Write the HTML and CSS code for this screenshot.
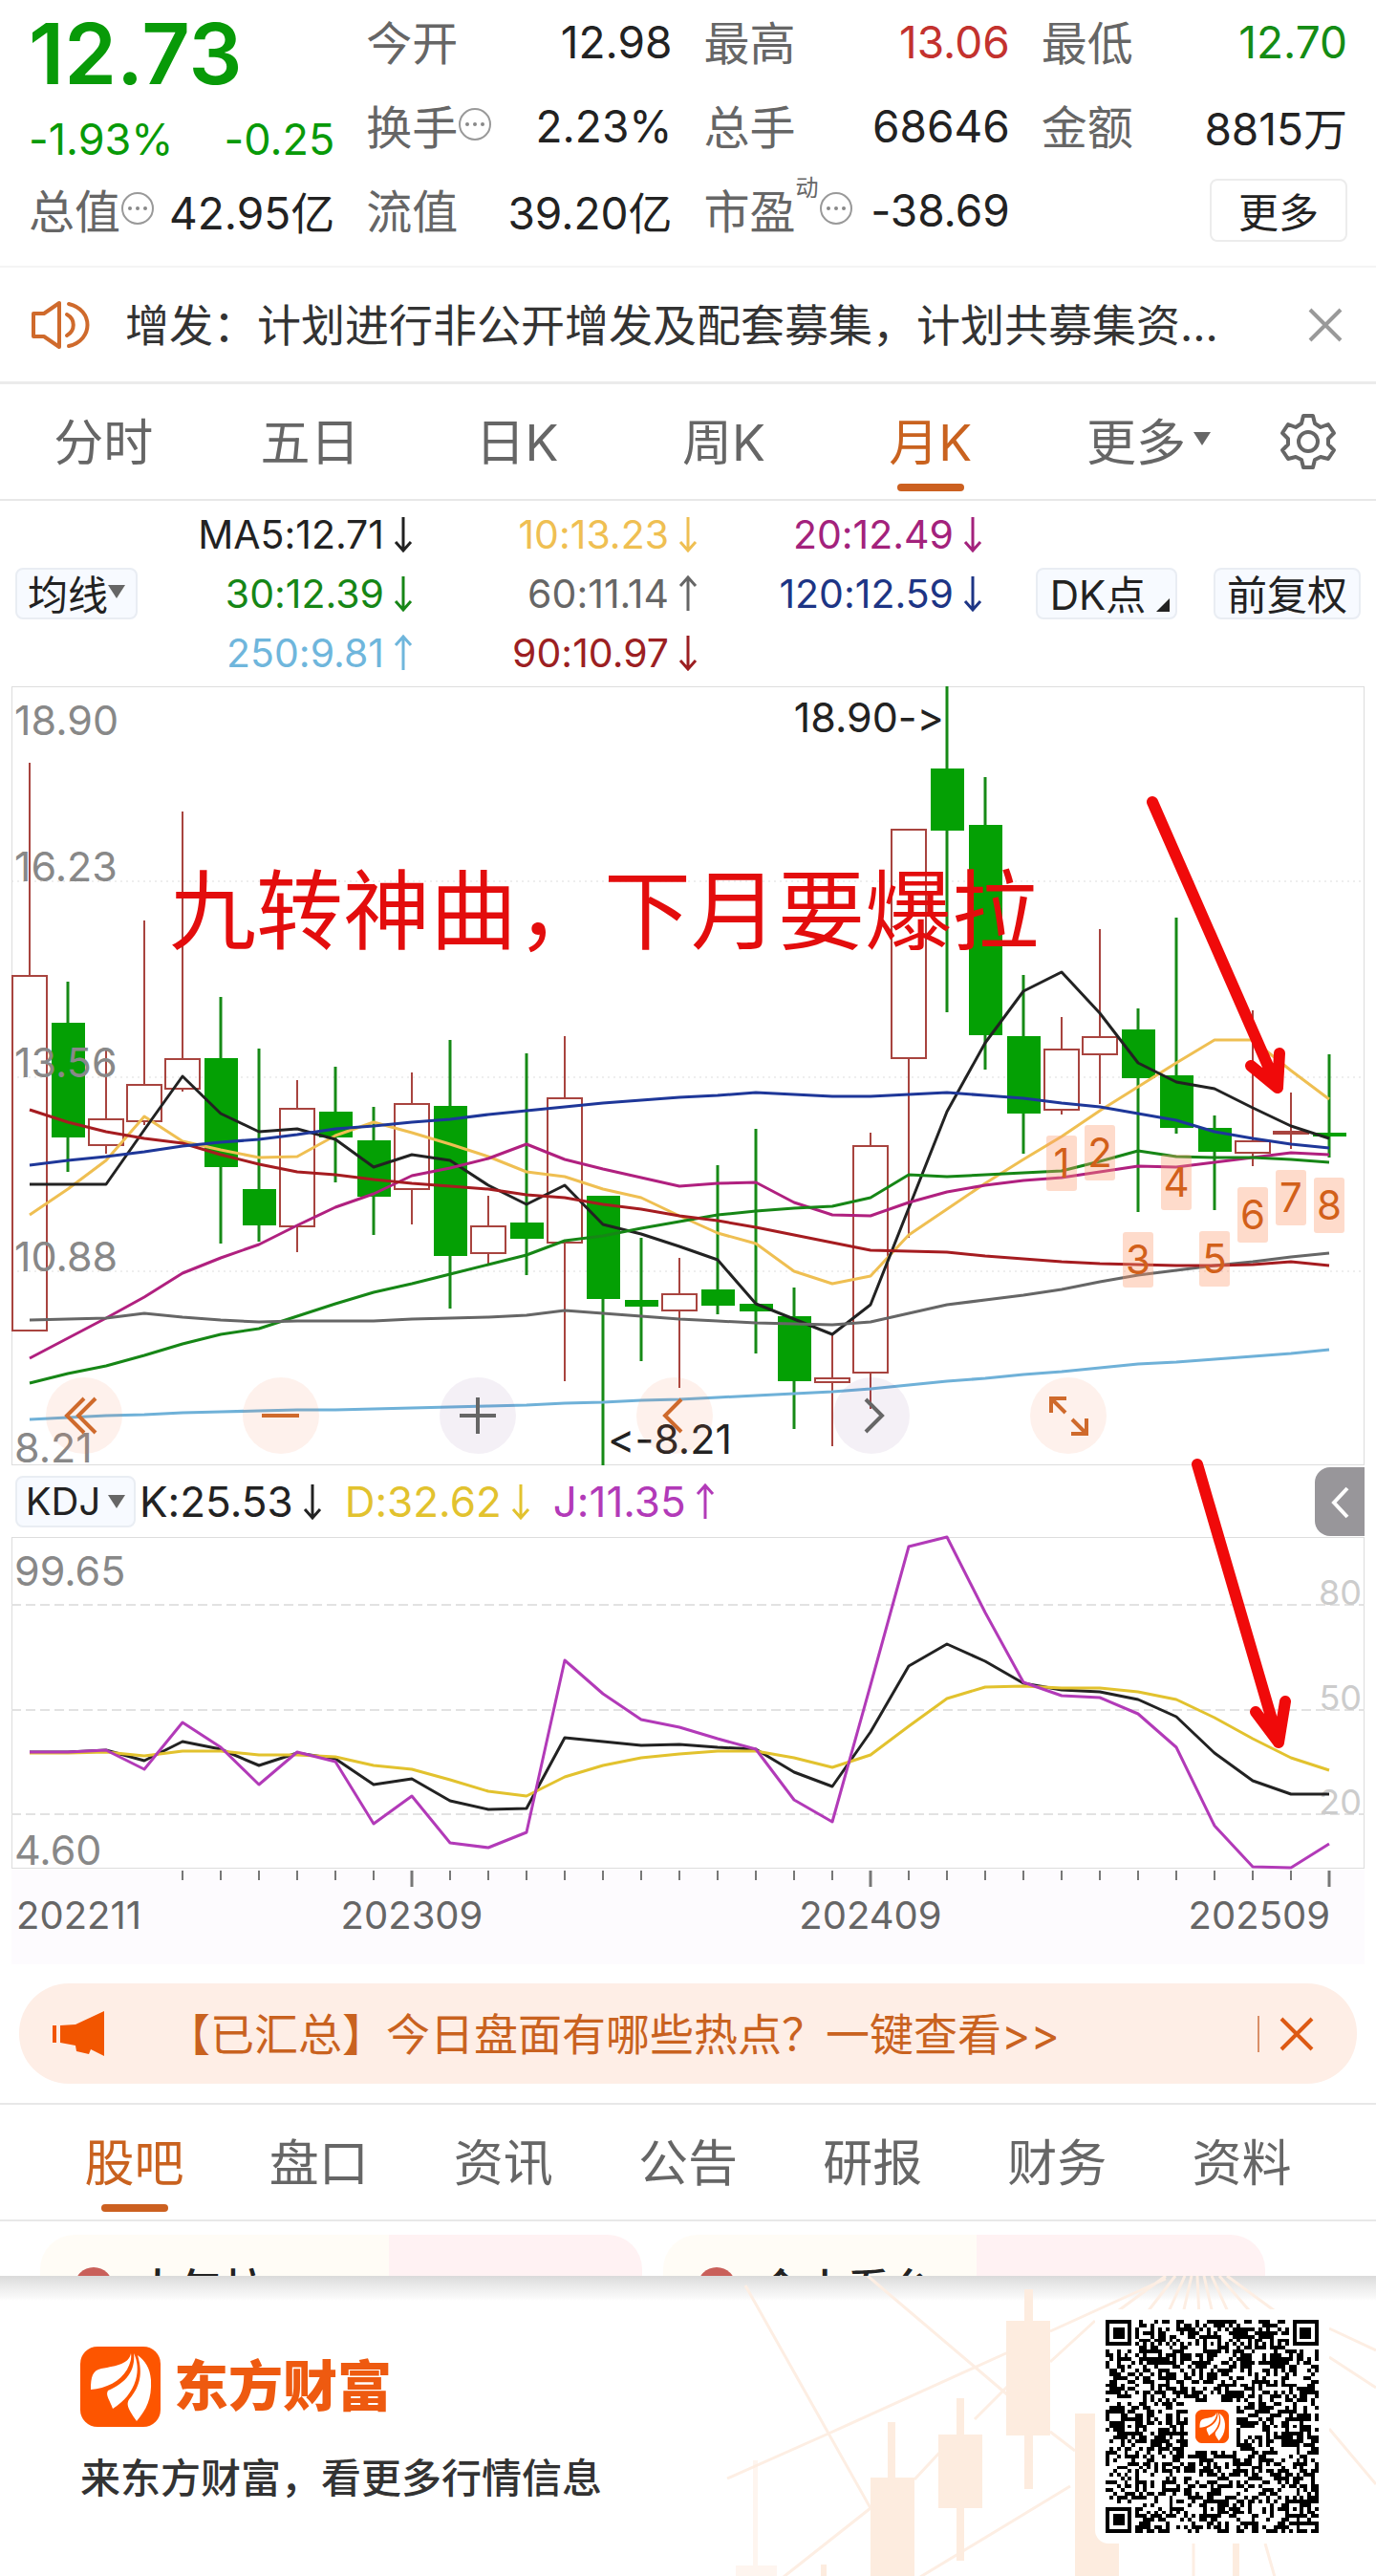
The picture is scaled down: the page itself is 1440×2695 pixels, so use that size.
FILE: index.html
```html
<!DOCTYPE html>
<html lang="zh-CN">
<head>
<meta charset="utf-8">
<meta name="viewport" content="width=device-width, initial-scale=1">
<title>月K - 东方财富</title>
<link rel="stylesheet" href="styles.css">
</head>
<body>
<svg class="defs" aria-hidden="true">
  <symbol id="info" viewBox="0 0 36 36"><circle cx="18" cy="18" r="16" fill="none" stroke="#999" stroke-width="2"/><circle cx="10" cy="18" r="2" fill="#888"/><circle cx="18" cy="18" r="2" fill="#888"/><circle cx="26" cy="18" r="2" fill="#888"/></symbol>
  <symbol id="down" viewBox="0 0 20 38"><path d="M10 1v35M2 27l8 9 8-9" fill="none" stroke="currentColor" stroke-width="3"/></symbol>
  <symbol id="up" viewBox="0 0 20 38"><path d="M10 37V2M2 11l8-9 8 9" fill="none" stroke="currentColor" stroke-width="3"/></symbol>
  <symbol id="close" viewBox="0 0 38 38"><path d="M3 3l32 32M35 3L3 35" fill="none" stroke="currentColor" stroke-width="4"/></symbol>
  <symbol id="caret" viewBox="0 0 18 16"><path d="M0 1h18L9 15z" fill="#666"/></symbol>
  <symbol id="mark" viewBox="0 0 84 84"><rect width="84" height="84" rx="18" fill="#fd5500"/><path d="M53 7C51 18 39 20 22 23c-9 2-11 8-11 22 16-1 31-9 38-21 3-6 5-11 4-17z" fill="#fff"/><path d="M56 7c2 18-8 31-27 39-3 5 2 10 5 19 12-8 20-17 24-30 3-10 2-20-2-28z" fill="#fff"/><path d="M60 9c6 20 2 32-7 44-6 6-4 11 6 25 10-12 16-23 15-43-1-13-6-20-14-26z" fill="#fff"/></symbol>
</svg>

<header class="quote">
  <div class="lead">
    <strong class="price">12.73</strong>
    <div class="change"><span>-1.93%</span><span>-0.25</span></div>
  </div>
  <div class="cell"><span class="key">今开</span><span class="val">12.98</span></div>
  <div class="cell"><span class="key">最高</span><span class="val rise">13.06</span></div>
  <div class="cell"><span class="key">最低</span><span class="val fall">12.70</span></div>
  <div class="cell"><span class="key">换手<svg class="info"><use href="#info"/></svg></span><span class="val">2.23%</span></div>
  <div class="cell"><span class="key">总手</span><span class="val">68646</span></div>
  <div class="cell"><span class="key">金额</span><span class="val">8815万</span></div>
  <div class="cell"><span class="key">总值<svg class="info"><use href="#info"/></svg></span><span class="val">42.95亿</span></div>
  <div class="cell"><span class="key">流值</span><span class="val">39.20亿</span></div>
  <div class="cell"><span class="key">市盈<sup>动</sup><svg class="info"><use href="#info"/></svg></span><span class="val">-38.69</span></div>
  <div class="cell end"><button class="more" type="button">更多</button></div>
</header>

<section class="notice">
  <svg class="speaker" viewBox="0 0 62 52" fill="none" stroke="#cf6a2c" stroke-width="4" stroke-linejoin="round"><path d="M2 14h11L29 3v46L13 38H2z"/><path d="M37 15c9 5 9 17 0 22M39 4c26 6 26 38 0 44" stroke-linecap="round"/></svg>
  <a class="notice-text" href="#notice">增发：计划进行非公开增发及配套募集，计划共募集资...</a>
  <button class="icon-btn grey" type="button" aria-label="关闭公告"><svg><use href="#close"/></svg></button>
</section>

<nav class="periods">
  <a href="#fs">分时</a><a href="#d5">五日</a><a href="#dk">日K</a><a href="#wk">周K</a><a class="on" href="#mk">月K</a><a class="extra" href="#more">更多<svg class="caret small"><use href="#caret"/></svg></a>
  <button class="gear" type="button" aria-label="设置"><svg viewBox="0 0 60 60" fill="none" stroke="#666" stroke-width="4" stroke-linejoin="round"><path d="M25 3h10l2 8 6 4 8-3 6 9-6 6v6l6 6-6 9-8-2-6 3-2 8H25l-2-8-6-3-8 2-6-9 6-6v-6l-6-6 6-9 8 3 6-4z"/><circle cx="30" cy="30" r="10"/></svg></button>
</nav>

<section class="averages">
  <button class="chip ma" type="button">均线<svg class="caret"><use href="#caret"/></svg></button>
  <span class="c-5">MA5:12.71<svg class="arrow"><use href="#down"/></svg></span>
  <span class="c-10">10:13.23<svg class="arrow"><use href="#down"/></svg></span>
  <span class="c-20">20:12.49<svg class="arrow"><use href="#down"/></svg></span>
  <div class="tools"><button class="chip dk" type="button">DK点<i class="corner"></i></button><button class="chip" type="button">前复权</button></div>
  <span class="c-30">30:12.39<svg class="arrow"><use href="#down"/></svg></span>
  <span class="c-60">60:11.14<svg class="arrow"><use href="#up"/></svg></span>
  <span class="c-120">120:12.59<svg class="arrow"><use href="#down"/></svg></span>
  <span class="c-250">250:9.81<svg class="arrow"><use href="#up"/></svg></span>
  <span class="c-90">90:10.97<svg class="arrow"><use href="#down"/></svg></span>
</section>

<section class="chart">
  <svg id="kline" viewBox="0 0 1416 815" role="img" aria-label="月K线图"></svg>
  <div class="controls">
    <button type="button" aria-label="最左"><svg viewBox="0 0 80 80"><path d="M40 22L22 40l18 18M52 22L34 40l18 18"/></svg></button>
    <button type="button" aria-label="缩小"><svg viewBox="0 0 80 80"><path d="M20 40h39"/></svg></button>
    <button class="cool" type="button" aria-label="放大"><svg viewBox="0 0 80 80"><path d="M21 40h38M40 21v38"/></svg></button>
    <button type="button" aria-label="左移"><svg viewBox="0 0 80 80"><path d="M47 23L30 40l17 17"/></svg></button>
    <button class="cool" type="button" aria-label="右移"><svg viewBox="0 0 80 80"><path d="M34 23l17 17-17 17"/></svg></button>
    <button type="button" aria-label="全屏"><svg viewBox="0 0 80 80"><path d="M22 37V22h16M23 23l14 14M59 43v16H43M58 58L44 44"/></svg></button>
  </div>
</section>

<section class="kdj-bar">
  <button class="chip" type="button">KDJ<svg class="caret small"><use href="#caret"/></svg></button>
  <span class="k">K:25.53<svg class="arrow"><use href="#down"/></svg></span>
  <span class="d">D:32.62<svg class="arrow"><use href="#down"/></svg></span>
  <span class="j">J:11.35<svg class="arrow"><use href="#up"/></svg></span>
  <button class="drawer" type="button" aria-label="展开"><svg viewBox="0 0 52 72"><path d="M34 22L20 37l14 15" fill="none" stroke="#fff" stroke-width="4"/></svg></button>
</section>

<section class="chart kdj">
  <svg id="kdj" viewBox="0 0 1416 447" role="img" aria-label="KDJ指标图"></svg>
</section>

<aside class="banner">
  <svg class="horn" viewBox="0 0 56 48" fill="#f25500"><path d="M0 15h4v18H0zM8 15l16-1L54 0v47L40 40l-2 5-13-3-1-6-16-3z"/></svg>
  <a href="#hot">【已汇总】今日盘面有哪些热点？一键查看&gt;&gt;</a>
  <button class="icon-btn hot" type="button" aria-label="关闭提示"><svg><use href="#close"/></svg></button>
</aside>

<nav class="sections">
  <a class="on" href="#guba">股吧</a><a href="#pankou">盘口</a><a href="#news">资讯</a><a href="#notices">公告</a><a href="#report">研报</a><a href="#finance">财务</a><a href="#data">资料</a>
</nav>

<section class="cards">
  <article class="card"><i class="dot"></i><h3>大午拉</h3></article>
  <article class="card"><i class="dot"></i><h3>今小看台</h3></article>
</section>

<footer class="promo">
  <svg class="backdrop" viewBox="0 0 720 315" aria-hidden="true">
    <g fill="none" stroke="#fdeee3" stroke-width="3"><path d="M60 10L191 243L100 315M188 0L335 125M379 163l26 20M41 212L147 165L335 80M379 58L500 3M237 213l28-30M300 150l35-35M379 90l47-43M243 315L400 220M500 0l-60 44M510 0l-34 44M520 0l-20 44M527 0l-10 44M533 0l2 44M540 0l10 44M548 0l20 44M556 0l38 44M564 0l60 44M671 55l49 23M671 85l49 32M671 160l49 58M529 280v35M604 280l10 35"/></g>
    <g fill="#fdecdf"><path d="M352 14h9v209h-9zM333 47h46v120h-46zM281 128h8v170h-8zM262 166h46v77h-46zM209 153h8v60h-8zM191 211h46v104h-46zM405 144h46v171h-46zM139 302h6v13h-6zM570 280h7v35h-7z"/><path d="M68 193h5v110h-5zM50 303h43v12H50z" opacity=".5"/></g>
  </svg>
  <div class="about">
    <div class="brand"><svg class="logo"><use href="#mark"/></svg><b>东方财富</b></div>
    <p>来东方财富，看更多行情信息</p>
  </div>
  <div class="qr"><svg id="qr" viewBox="0 0 57 57" role="img" aria-label="二维码"></svg></div>
</footer>
<script src="chart.js"></script>
</body>
</html>
```
FILE: styles.css
```css
* { box-sizing: border-box; }
body { margin: 0; background: #fff; color: #222; font-family: Inter, "Noto Sans CJK SC", sans-serif; font-feature-settings: "calt" 0; }
button { font: inherit; color: inherit; margin: 0; padding: 0; border: 0; background: none; }
a { color: inherit; text-decoration: none; }
svg { display: block; flex: none; }
.defs { position: absolute; width: 0; height: 0; }
.info { width: 36px; height: 36px; }
.arrow { width: 20px; height: 38px; margin-left: 10px; }
.caret { width: 18px; height: 16px; }
.icon-btn svg { width: 38px; height: 38px; }
.grey { color: #999; }

.quote { display: grid; grid-template-columns: repeat(4, 1fr); grid-auto-rows: 88px; column-gap: 33px; padding: 0 30px 14px; border-bottom: 2px solid #f4f4f4; font-size: 46px; }
.lead { grid-row: span 2; color: #089a08; }
.price { display: block; font-size: 88px; line-height: 112px; font-weight: 600; }
.change { display: flex; justify-content: space-between; font-size: 45px; line-height: 68px; }
.cell { display: flex; align-items: center; justify-content: space-between; white-space: nowrap; }
.key { display: flex; align-items: center; padding-bottom: 4px; font-size: 48px; color: #666; }
.key sup { align-self: flex-start; font-size: 24px; line-height: 28px; }
.rise { color: #c3322e; }
.fall { color: #148c14; }
.end { justify-content: flex-end; }
.more { width: 144px; height: 66px; padding-bottom: 4px; border: 2px solid #ececec; border-radius: 8px; font-size: 42px; }

.notice { display: flex; align-items: center; height: 122px; padding: 0 34px 0 33px; border-bottom: 3px solid #ebebeb; font-size: 46px; }
.speaker { width: 62px; height: 52px; margin-right: 36px; }
.notice-text { flex: 1; padding-bottom: 6px; white-space: nowrap; color: #333; }

.periods { display: flex; height: 122px; border-bottom: 2px solid #e8e8e8; font-size: 52px; color: #666; }
.periods a, .sections a { position: relative; flex: 1; display: flex; align-items: center; justify-content: center; padding-bottom: 6px; }
.periods .extra { flex: 0 0 216px; padding-left: 24px; }
.periods .on, .sections .on { color: #c9621f; }
.on::after { content: ""; position: absolute; left: 50%; bottom: 8px; width: 70px; height: 8px; margin-left: -35px; border-radius: 4px; background: #cc6020; }
.caret.small { margin-left: 8px; }
.gear { width: 142px; display: flex; align-items: center; justify-content: center; }
.gear svg { width: 60px; height: 60px; }

.averages { display: grid; grid-template-columns: 128px 288fr 298fr 298fr 396fr; grid-template-rows: repeat(3, 62px); padding: 4px 16px; font-size: 41px; }
.averages span { display: flex; align-items: center; justify-content: flex-end; }
.chip { display: flex; align-items: center; justify-content: center; height: 54px; padding: 0 12px 4px; border: 2px solid #e9edf3; border-radius: 8px; background: #f7faff; font-size: 42px; white-space: nowrap; }
.ma { grid-row: 1 / 4; align-self: center; padding: 0 0 4px; }
.tools { grid-row: 1 / 4; grid-column: 5; display: flex; align-items: center; justify-content: flex-end; gap: 38px; }
.dk { position: relative; width: 148px; padding: 0 32px 4px 14px; }
.corner { position: absolute; right: 6px; bottom: 6px; border-left: 14px solid transparent; border-bottom: 14px solid #222; }
.c-5 { color: #222; }
.c-10 { color: #efbf52; }
.c-20 { color: #a3227c; }
.c-30 { color: #168616; }
.c-60 { color: #666; }
.c-120 { color: #1d3585; }
.c-250 { color: #6fb6dc; }
.c-90 { color: #9c1f22; }
.averages .c-30 { grid-column: 2; }
.averages .c-250 { grid-column: 2; }

.chart { position: relative; margin: 0 12px; }
.chart > svg { width: 100%; overflow: visible; }
.chart text { font-size: 43px; fill: #888; }
.chart .note { fill: #222; }
.chart .level { font-size: 36px; fill: #ccc; text-anchor: end; }
.chart .date { font-size: 40px; fill: #666; }
.chart .middle, .chart .count { text-anchor: middle; }
.chart .last { text-anchor: end; }
.chart .count { font-size: 42px; fill: #d2601a; }
.chart .shout { font-size: 91px; font-weight: 400; fill: #e30d0d; }
.kdj { margin-bottom: 20px; }
.controls { position: absolute; left: 36px; bottom: 12px; display: flex; gap: 126px; }
.controls button { width: 80px; height: 80px; border-radius: 50%; background: rgba(250, 120, 70, 0.1); }
.controls path { fill: none; stroke: #cf6a2c; stroke-width: 4; }
.controls .cool { background: rgba(110, 70, 140, 0.08); }
.controls .cool path { stroke: #666; }

.kdj-bar { display: flex; align-items: center; height: 75px; padding: 0 12px 0 16px; font-size: 44px; }
.kdj-bar .chip { width: 126px; padding: 0; font-size: 40px; }
.kdj-bar span { display: flex; align-items: center; margin-right: 24px; }
.kdj-bar .k { margin-left: 4px; }
.kdj-bar .d { color: #e2c22e; }
.kdj-bar .j { color: #b23ab8; }
.drawer { width: 52px; height: 72px; margin-left: auto; border-radius: 16px 0 0 16px; background: #98969a; }

.banner { display: flex; align-items: center; height: 105px; margin: 0 20px 20px; padding: 0 44px 0 35px; border-radius: 52px; background: #feeee6; color: #c9621f; font-size: 46px; }
.banner a { flex: 1; margin-left: 63px; padding-bottom: 6px; white-space: nowrap; }
.horn { width: 56px; height: 48px; }
.hot { padding-left: 20px; border-left: 2px solid #d98f68; color: #dd5a14; }

.sections { display: flex; height: 124px; padding: 0 44px; border-top: 2px solid #e8e8e8; border-bottom: 2px solid #e8e8e8; font-size: 52px; color: #666; }

.cards { display: flex; gap: 22px; height: 57px; padding: 14px 116px 0 42px; overflow: hidden; }
.card { flex: 1; display: flex; height: 120px; padding: 34px 36px; border-radius: 36px; background: linear-gradient(90deg, #fffcf6 58%, #fff2f3 58%); }
.card + .card { background: linear-gradient(90deg, #fffcf6 52%, #fff2f3 52%); }
.dot { width: 40px; height: 40px; border-radius: 50%; background: #c9605a; }
.card h3 { margin: 0 0 0 24px; font-size: 46px; line-height: 46px; font-weight: 500; }

.promo { position: relative; display: flex; align-items: flex-start; justify-content: space-between; height: 315px; padding: 35px 49px 35px 84px; background: linear-gradient(#dadada, #ececec 12px, #f8f8f8 22px, #fff 26px); }
.backdrop { position: absolute; right: 0; top: 0; width: 50%; height: 100%; }
.about { padding-top: 39px; }
.brand { display: flex; align-items: center; gap: 14px; height: 84px; color: #ee5a10; font-size: 57px; line-height: 84px; }
.brand b { font-weight: 900; }
.logo { width: 84px; height: 84px; }
.about p { margin: 24px 0 0; font-size: 42px; line-height: 60px; font-weight: 500; color: #333; }
.qr { position: relative; width: 245px; padding: 11px; border-radius: 14px; background: #fff; }
.qr svg { width: 100%; }
```
FILE: chart.js
```js
// x of the i-th month, shared by both panels
const x = i => 19 + 40 * i;
const line = (ys, color) => `<polyline fill="none" stroke="${color}" stroke-width="3" stroke-linejoin="round" points="${ys.map((y, i) => x(i) + ',' + y).join(' ')}"/>`;
const text = (cls, px, py, s) => `<text class="${cls}" x="${px}" y="${py}">${s}</text>`;
const pointer = d => `<path d="${d}" fill="none" stroke="#f00a0a" stroke-width="12" stroke-linecap="round" stroke-linejoin="round"/>`;

// [high, body top, body bottom, low, direction]
const candles = [
  [80,303,674,674,1],[309,352,472,508,0],[380,453,480,489,1],[245,417,455,459,1],[131,390,421,424,1],
  [325,389,503,583,0],[379,526,564,581,0],[412,442,565,592,1],[398,445,472,519,0],[440,475,534,574,0],
  [404,437,526,563,1],[370,439,596,651,0],[533,565,593,604,1],[384,561,578,616,0],[366,431,582,727,1],
  [533,533,641,815,0],[577,642,649,706,0],[598,636,653,734,1],[501,631,648,657,0],[463,646,654,698,0],
  [629,659,727,777,0],[679,724,728,795,1],[467,481,718,756,1],[150,150,389,577,1],[0,86,151,341,0],
  [95,145,365,401,0],[302,366,447,489,0],[346,380,443,448,1],[254,367,385,437,1],[337,359,410,550,0],
  [242,407,462,468,0],[449,462,487,548,0],[339,476,488,502,1],[425,466,468,484,1],[385,467,471,493,0]
];
const averages = [
  ['#efbf52', [553,526,496,450,476,485,493,492,470,456,467,479,492,508,513,526,535,554,572,583,612,625,617,574,547,520,495,471,444,419,394,370,370,402,432]],
  ['#222', [521,521,521,464,408,447,466,463,474,503,490,496,522,542,522,563,573,586,600,646,662,678,647,546,445,373,319,299,342,394,414,421,441,460,473]],
  ['#b0207f', [703,682,661,639,614,598,584,564,545,531,512,504,494,479,495,505,514,523,520,519,540,553,554,540,529,522,517,514,508,502,503,498,493,488,490]],
  ['#168616', [729,719,711,700,688,678,672,659,646,634,625,615,605,595,580,575,567,560,553,549,546,544,535,511,513,511,509,507,497,486,492,493,493,495,498]],
  ['#666', [663,662,661,656,660,663,665,664,664,664,662,661,660,658,653,656,659,662,664,666,667,668,665,656,647,642,637,631,623,616,611,606,602,597,593]],
  ['#a51c20', [443,456,466,473,478,490,500,508,511,516,520,523,526,532,535,542,547,554,559,566,574,582,590,591,592,596,599,602,604,605,606,606,605,602,606]],
  ['#1e3799', [501,496,492,487,481,477,474,469,463,460,456,453,448,444,440,436,433,430,428,425,427,429,429,427,425,428,431,436,440,447,454,466,473,479,483]],
  ['#6fb1d8', [767,765,763,762,760,759,758,757,757,756,755,754,753,752,750,749,747,746,744,742,740,738,735,731,727,724,720,717,713,709,707,704,701,698,694]]
];
const counts = [470,459,571,490,570,524,506,514];

let k = '<rect x=".5" y=".5" width="1415" height="814" fill="none" stroke="#ddd"/>';
k += '<path d="M0 204h1416M0 409h1416M0 612h1416" stroke="#ddd" stroke-dasharray="2 4"/>';
k += candles.map(([h, t, b, l, up], i) => up
  ? `<path d="M${x(i)} ${h}V${t}M${x(i)} ${b}V${l}M${x(i) - 18} ${t}h36V${b}h-36z" fill="none" stroke="#a8443f" stroke-width="2"/>`
  : `<path d="M${x(i)} ${h}V${l}" stroke="#168a16" stroke-width="3"/><path d="M${x(i) - 17} ${t}h35V${b}h-35z" fill="#04a004"/>`).join('');
k += averages.map(([c, ys]) => line(ys, c)).join('');
k += counts.map((y, n) => `<rect x="${x(27 + n) - 16}" y="${y}" width="32" height="58" rx="3" fill="#fb9a70" opacity=".36"/>` + text('count', x(27 + n), y + 44, n + 1)).join('');
k += [['18.90', 51], ['16.23', 204], ['13.56', 409], ['10.88', 612], ['8.21', 812]].map(([s, y]) => text('', 3, y, s)).join('');
k += text('note last', 976, 48, '18.90-&gt;') + text('note', 624, 803, '&lt;-8.21');
k += text('shout', 165, 268, '九转神曲，下月要爆拉');
k += pointer('M1194 121L1325 420M1297 397L1325 420L1327 384');
document.getElementById('kline').innerHTML = k;

const kdj = [
  ['#222', [225,225,223,234,214,222,239,226,232,259,253,276,285,284,210,214,218,217,220,222,246,261,204,135,112,130,153,160,162,170,188,226,255,269,269]],
  ['#e2c22e', [226,226,225,229,224,224,228,228,230,239,243,254,266,271,251,239,231,227,224,224,231,241,228,198,169,157,156,158,158,162,170,189,211,231,244]],
  ['#b23ab8', [225,225,223,243,194,220,259,225,235,300,271,320,325,309,129,164,191,199,211,222,275,298,155,10,0,79,152,166,168,185,220,302,345,346,321]]
];
let d = '<rect x="0" y="348" width="1416" height="99" fill="#fdfbfe"/><rect x=".5" y=".5" width="1415" height="346" fill="none" stroke="#ddd"/>';
d += '<path d="M0 71h1416M0 181h1416M0 290h1416" stroke="#e2e2e2" stroke-width="2" stroke-dasharray="10 5"/>';
for (let i = 4; i < 35; i++) {
  const major = (i - 10) % 12 === 0;
  d += `<path d="M${x(i)} 349v${major ? 17 : 10}" stroke="#777" stroke-width="${major ? 3 : 2}"/>`;
}
d += [['80', 71], ['50', 181], ['20', 290]].map(([s, y]) => text('level', 1413, y, s)).join('');
d += text('', 3, 51, '99.65') + text('', 3, 343, '4.60');
d += kdj.map(([c, ys]) => line(ys, c)).join('');
d += text('date', 5, 410, '202211') + text('date middle', x(10), 410, '202309') + text('date middle', x(22), 410, '202409') + text('date last', 1380, 410, '202509');
d += pointer('M1241 -76L1326 215M1302 183L1326 215L1333 172');
document.getElementById('kdj').innerHTML = d;

// 57x57 code: three finders, alignment marks, seeded data modules
const N = 57, grid = Array.from({ length: N }, () => Array(N).fill(null));
const ring = (cx, cy, r, dark) => {
  for (let y = cy - r; y <= cy + r; y++) for (let c = cx - r; c <= cx + r; c++)
    if (grid[y] && c >= 0 && c < N) grid[y][c] = dark(Math.max(Math.abs(y - cy), Math.abs(c - cx)));
};
[[28, 6], [6, 28], [50, 28], [28, 50], [50, 50]].forEach(([a, b]) => ring(a, b, 2, m => m !== 1));
[[3, 3], [53, 3], [3, 53]].forEach(([a, b]) => ring(a, b, 4, m => m < 2 || m === 3));
ring(28, 28, 6, () => false);
let seed = 20250;
let path = '';
for (let r = 0; r < N; r++) for (let c = 0; c < N; c++) {
  seed = (seed * 1103515245 + 12345) % 2147483648;
  const v = grid[r][c] === null ? (r === 6 || c === 6 ? (r + c) % 2 === 0 : seed / 2147483648 < 0.5) : grid[r][c];
  if (v) path += `M${c} ${r}h1v1h-1z`;
}
document.getElementById('qr').innerHTML = `<path d="${path}" shape-rendering="crispEdges"/><use href="#mark" x="24" y="24" width="9" height="9"/>`;
```
